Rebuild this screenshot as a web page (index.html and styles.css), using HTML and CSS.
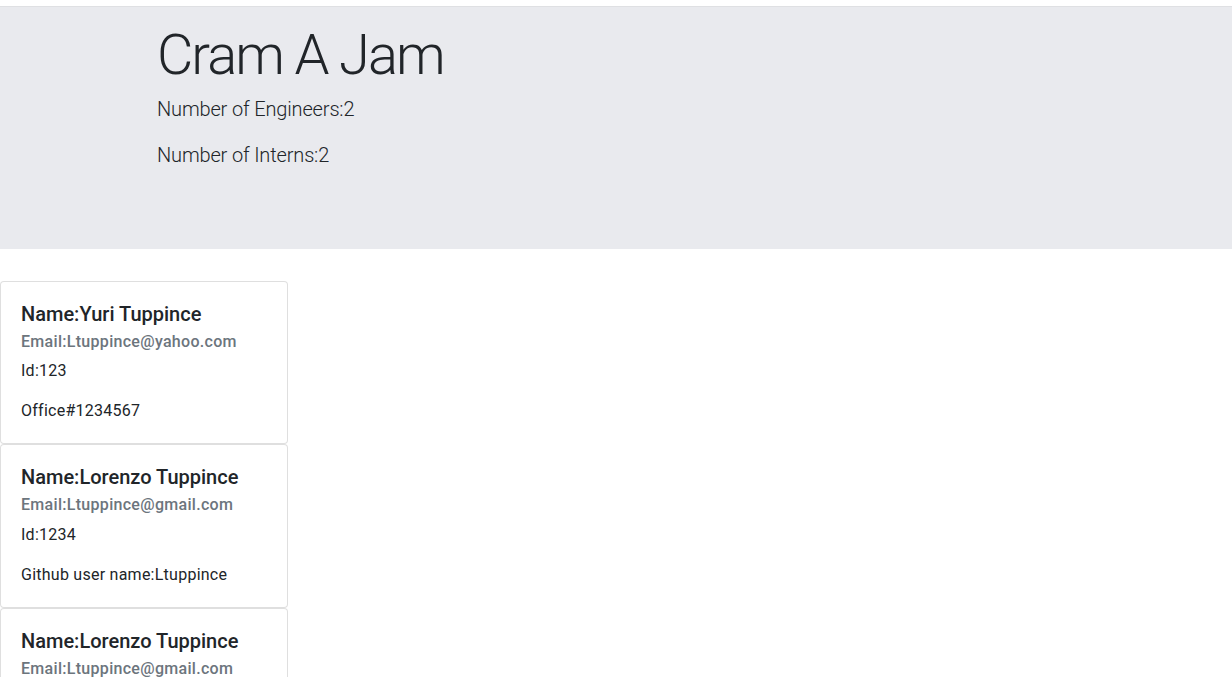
FILE: index.html
```html
<!DOCTYPE html>
<html lang="en">
<head>
<meta charset="utf-8">
<title>Cram A Jam</title>
<link rel="stylesheet" href="styles.css">
</head>
<body>
<div class="topstrip"></div>
<header class="jumbotron">
  <div class="container">
    <h1 class="display">Cram A Jam</h1>
    <p class="lead">Number of Engineers:2</p>
    <p class="lead">Number of Interns:2</p>
  </div>
</header>
<main class="cards">
  <div class="card">
    <div class="card-body">
      <h5 class="card-title">Name:Yuri Tuppince</h5>
      <h6 class="card-subtitle">Email:Ltuppince@yahoo.com</h6>
      <p class="card-text">Id:123</p>
      <p class="card-text">Office#1234567</p>
    </div>
  </div>
  <div class="card">
    <div class="card-body">
      <h5 class="card-title">Name:Lorenzo Tuppince</h5>
      <h6 class="card-subtitle">Email:Ltuppince@gmail.com</h6>
      <p class="card-text">Id:1234</p>
      <p class="card-text">Github user name:Ltuppince</p>
    </div>
  </div>
  <div class="card">
    <div class="card-body">
      <h5 class="card-title">Name:Lorenzo Tuppince</h5>
      <h6 class="card-subtitle">Email:Ltuppince@gmail.com</h6>
      <p class="card-text">Id:1234</p>
      <p class="card-text">Github user name:Ltuppince</p>
    </div>
  </div>
</main>
</body>
</html>
```
FILE: styles.css
```css
* { box-sizing: border-box; }
body {
  margin: 0;
  font-family: Roboto, "Liberation Sans", Arial, sans-serif;
  font-size: 16px;
  line-height: 1.5;
  color: #212529;
  background: #fff;
}
.topstrip {
  height: 7px;
  border-bottom: 1px solid #dfe0e3;
}
.jumbotron {
  background: #e9eaee;
  padding: 13px 0 63px;
  margin-bottom: 32px;
}
.container {
  padding-left: 157px;
}
.display {
  font-size: 56px;
  font-weight: 300;
  letter-spacing: -2px;
  line-height: 1.2;
  margin: 2px 0 5px;
}
.lead {
  font-size: 20px;
  font-weight: 300;
  letter-spacing: -0.15px;
  line-height: 30px;
  margin: 0 0 16px;
}
.cards {
  display: flex;
  flex-direction: column;
  align-items: flex-start;
}
.card {
  width: 288px;
  border: 1px solid rgba(0,0,0,.125);
  border-radius: 4px;
  background: #fff;
}
.card-body { padding: 20px; }
.card-title {
  font-size: 20px;
  font-weight: 500;
  line-height: 24px;
  margin: 0 0 12px;
}
.card-subtitle {
  font-size: 16px;
  font-weight: 500;
  letter-spacing: 0.3px;
  line-height: 19.2px;
  margin: -6px 0 8px;
  color: #6c757d;
}
.card-text {
  letter-spacing: 0.25px;
  margin: 0 0 16px;
}
.card-text:last-child { margin-bottom: 0; }
```
